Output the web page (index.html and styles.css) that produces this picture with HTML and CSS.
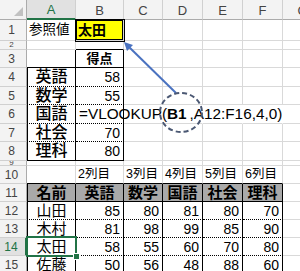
FILE: index.html
```html
<!DOCTYPE html>
<html lang="ja">
<head>
<meta charset="utf-8">
<title>VLOOKUP</title>
<link rel="stylesheet" href="styles.css">
</head>
<body>
<div class="sheet">
  <!-- header row -->
  <div class="c corner"><span class="tri"></span></div>
  <div class="c ch sel-col">A</div>
  <div class="c ch">B</div>
  <div class="c ch">C</div>
  <div class="c ch">D</div>
  <div class="c ch">E</div>
  <div class="c ch">F</div>
  <div class="c ch">G</div>
  <!-- row 1 -->
  <div class="c rh">1</div>
  <div class="c t-left jp13">参照値</div>
  <div class="c key">太田</div>
  <div class="c"></div><div class="c"></div><div class="c"></div><div class="c"></div><div class="c"></div>
  <!-- row 2 -->
  <div class="c rh short">2</div>
  <div class="c"></div>
  <div class="c bb"></div>
  <div class="c"></div><div class="c"></div><div class="c"></div><div class="c"></div><div class="c"></div>
  <!-- row 3 -->
  <div class="c rh">3</div>
  <div class="c br bb"></div>
  <div class="c br bb t-center hd">得点</div>
  <div class="c"></div><div class="c"></div><div class="c"></div><div class="c"></div><div class="c"></div>
  <!-- row 4 -->
  <div class="c rh">4</div>
  <div class="c bl br bd t-center subj">英語</div>
  <div class="c br bd t-right num">58</div>
  <div class="c"></div><div class="c"></div><div class="c"></div><div class="c"></div><div class="c"></div>
  <!-- row 5 -->
  <div class="c rh">5</div>
  <div class="c bl br bd t-center subj">数学</div>
  <div class="c br bd t-right num">55</div>
  <div class="c"></div><div class="c"></div><div class="c"></div><div class="c"></div><div class="c"></div>
  <!-- row 6 -->
  <div class="c rh">6</div>
  <div class="c bl br bd t-center subj">国語</div>
  <div class="c br bd formula">=VLOOKUP(<b class="ref">B1</b>,A12:F16,4,0)</div>
  <div class="c nogrid"></div><div class="c nogrid"></div><div class="c nogrid"></div><div class="c nogrid"></div><div class="c"></div>
  <!-- row 7 -->
  <div class="c rh">7</div>
  <div class="c bl br bd t-center subj">社会</div>
  <div class="c br bd t-right num">70</div>
  <div class="c"></div><div class="c"></div><div class="c"></div><div class="c"></div><div class="c"></div>
  <!-- row 8 -->
  <div class="c rh">8</div>
  <div class="c bl br bb t-center subj">理科</div>
  <div class="c br bb t-right num">80</div>
  <div class="c"></div><div class="c"></div><div class="c"></div><div class="c"></div><div class="c"></div>
  <!-- row 9 -->
  <div class="c rh short">9</div>
  <div class="c"></div><div class="c"></div><div class="c"></div><div class="c"></div><div class="c"></div><div class="c"></div><div class="c"></div>
  <!-- row 10 -->
  <div class="c rh">10</div>
  <div class="c bb"></div>
  <div class="c bb col">2列目</div>
  <div class="c bb col">3列目</div>
  <div class="c bb col">4列目</div>
  <div class="c bb col">5列目</div>
  <div class="c bb col">6列目</div>
  <div class="c"></div>
  <!-- row 11 -->
  <div class="c rh">11</div>
  <div class="c bl br bb th">名前</div>
  <div class="c br bb th">英語</div>
  <div class="c br bb th">数学</div>
  <div class="c br bb th">国語</div>
  <div class="c br bb th">社会</div>
  <div class="c br bb th">理科</div>
  <div class="c"></div>
  <!-- row 12 -->
  <div class="c rh">12</div>
  <div class="c bl br bd t-center name">山田</div>
  <div class="c br bd t-right num">85</div>
  <div class="c br bd t-right num">80</div>
  <div class="c br bd t-right num">81</div>
  <div class="c br bd t-right num">80</div>
  <div class="c br bd t-right num">70</div>
  <div class="c"></div>
  <!-- row 13 -->
  <div class="c rh">13</div>
  <div class="c bl br bd t-center name">木村</div>
  <div class="c br bd t-right num">81</div>
  <div class="c br bd t-right num">98</div>
  <div class="c br bd t-right num">99</div>
  <div class="c br bd t-right num">85</div>
  <div class="c br bd t-right num">90</div>
  <div class="c"></div>
  <!-- row 14 -->
  <div class="c rh sel-row">14</div>
  <div class="c bl br bd t-center name active">太田</div>
  <div class="c br bd t-right num">58</div>
  <div class="c br bd t-right num">55</div>
  <div class="c br bd t-right num">60</div>
  <div class="c br bd t-right num">70</div>
  <div class="c br bd t-right num">80</div>
  <div class="c"></div>
  <!-- row 15 -->
  <div class="c rh">15</div>
  <div class="c bl br bd t-center name">佐藤</div>
  <div class="c br bd t-right num">50</div>
  <div class="c br bd t-right num">56</div>
  <div class="c br bd t-right num">48</div>
  <div class="c br bd t-right num">88</div>
  <div class="c br bd t-right num">60</div>
  <div class="c"></div>

  <svg class="overlay" width="300" height="271" viewBox="0 0 300 271" aria-hidden="true">
    <line x1="176" y1="93" x2="129" y2="47" stroke="#4a72c0" stroke-width="2"/>
    <polygon points="124,42 133,45 127,51" fill="#4a72c0"/>
    <ellipse cx="181" cy="112.5" rx="21" ry="19.5" fill="none" stroke="#4b5873" stroke-width="2" stroke-dasharray="5 3"/>
  </svg>
</div>
</body>
</html>
```

FILE: styles.css
```css
html, body {
  margin: 0;
  padding: 0;
  background: #fff;
  overflow: hidden;
}

body {
  width: 300px;
  height: 271px;
}

.sheet {
  position: relative;
  display: grid;
  grid-template-columns: 27px 49px 48px 39px 40px 40px 40px 40px;
  grid-template-rows: 20px 21px 9px 18px 19px 18px 19px 18px 19px 5px 18px 18px 18px 18px 18px 18px;
  font-family: "Liberation Sans", "Noto Sans CJK JP", sans-serif;
  color: #000;
}

.c {
  box-sizing: border-box;
  border-right: 1px solid #d9d9d9;
  border-bottom: 1px solid #d9d9d9;
  display: flex;
  align-items: center;
  overflow: hidden;
  white-space: nowrap;
  line-height: 1;
  min-width: 0;
  min-height: 0;
}

/* headers */
.corner {
  position: relative;
  background: #f3f3f3;
  border-right-color: #ababab;
  border-bottom-color: #ababab;
}
.tri {
  position: absolute;
  right: 3px;
  bottom: 3px;
  width: 0;
  height: 0;
  border-left: 9px solid transparent;
  border-bottom: 9px solid #c1c1c1;
}
.ch {
  background: #f3f3f3;
  border-right-color: #d0d0d0;
  border-bottom-color: #ababab;
  justify-content: center;
  font-size: 13px;
  color: #444;
  padding-top: 1px;
}
.rh {
  background: #f3f3f3;
  border-right-color: #ababab;
  border-bottom-color: #d0d0d0;
  justify-content: center;
  font-size: 12px;
  color: #444;
  padding-right: 3px;
}
.rh.short { font-size: 8px; }
.sel-col {
  background: #e1e1e1;
  border-bottom: 2px solid #217346;
  color: #217346;
}
.sel-row {
  background: #e1e1e1;
  border-right: 2px solid #217346;
  color: #217346;
}

/* alignment */
.t-left { justify-content: flex-start; padding-left: 2px; }
.t-center { justify-content: center; }
.t-right { justify-content: flex-end; padding-right: 3px; }

/* borders */
.bb { border-bottom: 1px solid #000; }
.bd { border-bottom: 1px dotted #000; }
.br { border-right: 1px solid #000; }
.bl { border-left: 1px solid #000; }
.nogrid { border-right-color: transparent; }

/* text styles */
.jp13 { font-size: 13.5px; }
.key {
  position: relative;
  z-index: 1;
  background: #ffff00;
  font-size: 14px;
  font-weight: 700;
  padding-left: 2px;
  box-shadow: 0 0 0 1px #000, inset 0 0 0 1px #000;
}
.hd { font-size: 13px; font-weight: 700; }
.subj { font-size: 16px; font-weight: 500; }
.name { font-size: 15px; }
.num { font-size: 14px; }
.th {
  background: #a9a9a9;
  justify-content: center;
  font-size: 15px;
  font-weight: 700;
}
.col { font-size: 12.5px; padding-left: 2px; }

.formula {
  position: relative;
  z-index: 1;
  overflow: visible;
  font-size: 15.3px;
  padding-left: 3px;
}
.ref { margin-right: 3px; }

.active {
  position: relative;
  overflow: visible;
}
.active::after {
  content: "";
  position: absolute;
  left: -2px;
  top: -2px;
  right: -2px;
  bottom: -2px;
  border: 2px solid #217346;
  z-index: 2;
}
.active::before {
  content: "";
  position: absolute;
  right: -5px;
  bottom: -5px;
  width: 5px;
  height: 5px;
  background: #217346;
  border: 1px solid #fff;
  z-index: 3;
}

.overlay {
  position: absolute;
  left: 0;
  top: 0;
  pointer-events: none;
  z-index: 5;
}
```
